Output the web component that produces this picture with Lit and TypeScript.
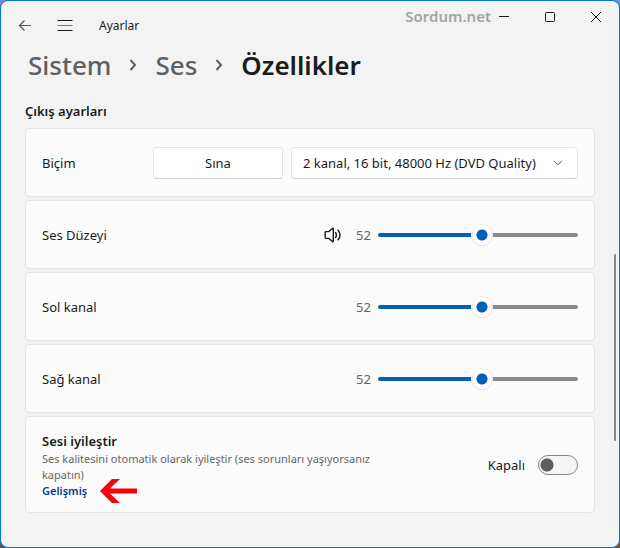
import { LitElement, html, css, svg, nothing } from "lit";
import { customElement, property, state } from "lit/decorators.js";

const speakerIcon = html`<svg class="speaker" viewBox="0 0 18 16" width="18" height="16" fill="none" stroke="#1b1b1b"
  stroke-width="1.4" stroke-linecap="round" stroke-linejoin="round" aria-hidden="true">
  <path d="M8.4 1.4 4.9 4.6H2.2Q1.2 4.6 1.2 5.6v4.8q0 1 1 1h2.7l3.5 3.2q.9.5.9-.5V1.9q0-1-.9-.5Z" />
  <path d="M11.6 5.5q1.6 2.5 0 5M14 3.2q4.2 4.8 0 9.6" />
</svg>`;

@customElement("volume-slider")
export class VolumeSlider extends LitElement {
  @property() label = "";
  @property({ type: Number }) value = 52;
  @property({ type: Boolean }) speaker = false;

  static styles = css`
    :host { display: block; }
    .row { display: flex; align-items: center; }
    .name { flex: 1; }
    .speaker { display: block; margin-right: 14px; }
    .value { width: 22px; color: #666; }
    input {
      appearance: none;
      width: 200px;
      height: 22px;
      margin: 0;
      background: none;
    }
    input::-webkit-slider-runnable-track {
      height: 4px;
      border-radius: 2px;
      background: linear-gradient(to right, #005fb8 var(--fill), #8a8a8a var(--fill));
    }
    input::-webkit-slider-thumb {
      appearance: none;
      width: 20px;
      height: 20px;
      margin-top: -8px;
      border-radius: 50%;
      background: radial-gradient(circle, #005fb8 5px, #fff 6px);
      box-shadow: 0 0 0 1px #ececec, 0 1px 0 0 #c8c8c8;
    }
  `;

  render() {
    return html`<div class="row">
      <label class="name" for="range">${this.label}</label>
      ${this.speaker ? speakerIcon : nothing}
      <output class="value" for="range">${this.value}</output>
      <input id="range" type="range" min="0" max="100" .value=${String(this.value)}
        style="--fill: ${this.value}%"
        @input=${(e: Event) => (this.value = Number((e.target as HTMLInputElement).value))} />
    </div>`;
  }
}

@customElement("app-root")
export class AppRoot extends LitElement {
  @state() private enhance = false;

  static styles = css`
    :host {
      display: block;
      background: linear-gradient(#6f8fc4, #5b5552);
      font-family: "Noto Sans", "Open Sans", sans-serif;
      font-size: 13px;
      line-height: 20px;
      color: #1b1b1b;
    }
    * { box-sizing: border-box; }
    .window {
      position: relative;
      min-height: 100vh;
      border: 1px solid #0078d4;
      border-radius: 8px;
      background: #f3f3f3;
    }
    button, select { font: inherit; color: inherit; }
    svg { display: block; }
    .titlebar { display: flex; align-items: flex-start; height: 44px; }
    .nav { display: flex; flex: 1; align-items: center; padding: 4px 0 0 4px; }
    .icon { display: grid; place-items: center; width: 40px; height: 40px; padding: 0; border: 0; background: none; }
    .app { margin-left: 14px; font-size: 12px; line-height: 18px; padding-top: 2px; }
    .brand { font-size: 15px; font-weight: 600; line-height: 30px; color: #a3a3a3; }
    .caption { width: 46px; height: 32px; }
    .controls { display: flex; margin-left: -10px; }
    .crumbs {
      display: flex;
      align-items: center;
      gap: 17px;
      margin: 0;
      padding: 0 27px;
      list-style: none;
      font-size: 26px;
      font-weight: 500;
      line-height: 40px;
    }
    .crumbs a { color: #5f5f5f; text-decoration: none; }
    h1 { margin: 0; font: inherit; font-weight: 600; }
    main { padding: 16px 24px 34px; }
    h2 { margin: 0 0 7px; font-size: 13px; font-weight: 600; line-height: 20px; }
    .cards { display: grid; gap: 3px; }
    .card {
      display: grid;
      align-items: center;
      min-height: 69px;
      padding: 14px 16px 13px;
      border: 1px solid #e5e5e5;
      border-radius: 4px;
      background: #fbfbfb;
    }
    .format { display: flex; align-items: center; gap: 8px; }
    .format label { flex: 1; }
    .test, select {
      height: 32px;
      border: 1px solid #e5e5e5;
      border-bottom-color: #ccc;
      border-radius: 4px;
      background: #fff;
    }
    .test { width: 130px; }
    .picker { display: grid; align-items: center; width: 287px; }
    .picker > * { grid-area: 1 / 1; }
    select { appearance: none; width: 100%; padding: 0 32px 0 11px; }
    .chevron { justify-self: end; margin-right: 15px; pointer-events: none; }
    .enhance { display: flex; align-items: center; justify-content: space-between; }
    .info { max-width: 360px; }
    h3 { margin: 0; font-size: 13px; font-weight: 600; line-height: 20px; }
    .info p { margin: 0; font-size: 11px; line-height: 16px; color: #666; }
    .more { display: flex; align-items: center; gap: 13px; height: 16px; font-size: 11px; font-weight: 600; }
    .more a { color: #003e92; text-decoration: none; }
    .more svg { flex: none; }
    .switch { display: flex; align-items: center; gap: 13px; }
    .switch input {
      appearance: none;
      width: 40px;
      height: 20px;
      margin: 0;
      border: 1px solid #868686;
      border-radius: 10px;
      background: radial-gradient(circle at 8px 9px, #5d5d5d 6px, #f4f4f4 7px);
    }
    .switch input:checked {
      border-color: #005fb8;
      background: radial-gradient(circle at 29px 9px, #fff 6px, #005fb8 7px);
    }
    .scroll {
      position: absolute;
      top: 253px;
      right: 3px;
      width: 2px;
      height: 187px;
      border-radius: 1px;
      background: #868686;
    }
  `;

  private separator() {
    return html`<li aria-hidden="true"><svg width="10" height="12" viewBox="0 0 10 12" fill="none" stroke="#5f5f5f"
      stroke-width="2"><path d="M2.5 1 7 6l-4.5 5" /></svg></li>`;
  }

  private glyph(shape: unknown, size = 16) {
    return html`<svg width=${size} height=${size} viewBox="0 0 ${size} ${size}" fill="none"
      stroke="#1b1b1b" aria-hidden="true">${shape}</svg>`;
  }

  render() {
    return html`<div class="window">
      <header class="titlebar">
        <div class="nav">
          <button class="icon" aria-label="Geri">${this.glyph(svg`<path stroke="#555" stroke-width="1.2" d="M14 8.5H2.5M7.5 3.5l-5 5 5 5"/>`)}</button>
          <button class="icon" aria-label="Menü">${this.glyph(svg`<path d="M.5 3.5h15M.5 13.5h15"/><path stroke="#777" d="M.5 8.5h15"/>`)}</button>
          <span class="app">Ayarlar</span>
        </div>
        <span class="brand">Sordum.net</span>
        <div class="controls">
          <button class="icon caption" aria-label="Simge durumuna küçült">${this.glyph(svg`<path d="M0 4.5h10"/>`, 10)}</button>
          <button class="icon caption" aria-label="Ekranı kapla">${this.glyph(svg`<rect x=".5" y=".5" width="9" height="9" rx="1"/>`, 10)}</button>
          <button class="icon caption" aria-label="Kapat">${this.glyph(svg`<path d="M0 0 10 10M10 0 0 10"/>`, 10)}</button>
        </div>
      </header>
      <nav>
        <ol class="crumbs">
          <li><a href="#sistem">Sistem</a></li>
          ${this.separator()}
          <li><a href="#ses">Ses</a></li>
          ${this.separator()}
          <li><h1>Özellikler</h1></li>
        </ol>
      </nav>
      <main>
        <h2>Çıkış ayarları</h2>
        <div class="cards">
          <section class="card">
            <div class="format">
              <label for="format">Biçim</label>
              <button class="test">Sına</button>
              <div class="picker">
                <select id="format"><option>2 kanal, 16 bit, 48000 Hz (DVD Quality)</option></select>
                <svg class="chevron" width="10" height="6" viewBox="0 0 10 6" fill="none" stroke="#5f5f5f"><path d="M1 .8l4 4 4-4"/></svg>
              </div>
            </div>
          </section>
          <section class="card"><volume-slider label="Ses Düzeyi" speaker></volume-slider></section>
          <section class="card"><volume-slider label="Sol kanal"></volume-slider></section>
          <section class="card"><volume-slider label="Sağ kanal"></volume-slider></section>
          <section class="card">
            <div class="enhance">
              <div class="info">
                <h3>Sesi iyileştir</h3>
                <p>Ses kalitesini otomatik olarak iyileştir (ses sorunları yaşıyorsanız kapatın)</p>
                <div class="more">
                  <a href="#gelismis">Gelişmiş</a>
                  <svg width="37" height="24" viewBox="0 0 37 24" aria-hidden="true"><path fill="#ff0010" d="M0 12 12 0h8L10 9.5h27v5H10L20 24h-8Z"/></svg>
                </div>
              </div>
              <label class="switch">
                <span>${this.enhance ? "Açık" : "Kapalı"}</span>
                <input type="checkbox" role="switch" .checked=${this.enhance}
                  @change=${(e: Event) => (this.enhance = (e.target as HTMLInputElement).checked)} />
              </label>
            </div>
          </section>
        </div>
      </main>
      <div class="scroll"></div>
    </div>`;
  }
}
